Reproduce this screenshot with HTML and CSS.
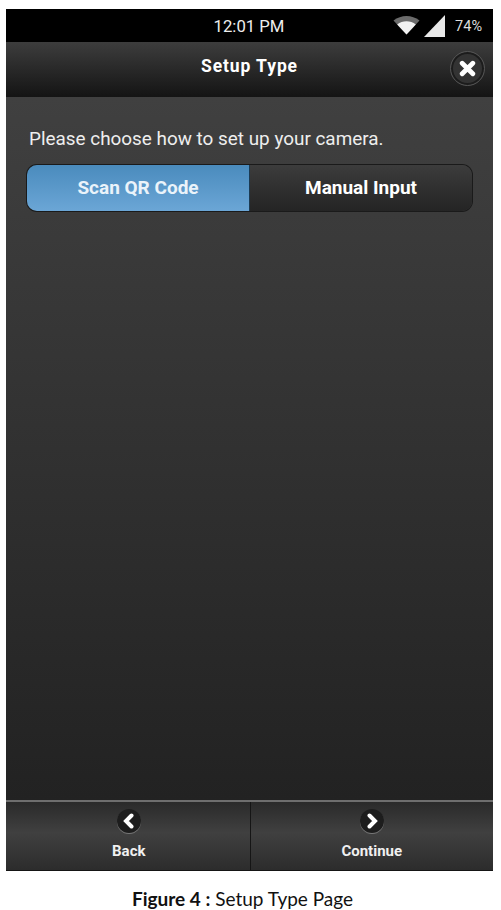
FILE: index.html
```html
<!DOCTYPE html>
<html lang="en">
<head>
    <meta charset="UTF-8">
    <meta name="viewport" content="width=device-width, initial-scale=1.0">
    <title>Setup Type</title>
    <link rel="stylesheet" href="styles.css">
</head>

<body>
    <div class="phone">
        <div class="status-bar">
            <span class="status-time">12:01 PM</span>
            <div class="status-icons">
                <svg class="wifi-icon" viewBox="0 0 27 20" width="27" height="20">
                    <path d="M0.5 5.5 C8 -0.5 19 -0.5 26.5 5.5 L13.5 19.5 Z" fill="#6b6b6b" />
                    <path d="M4.2 9.5 C9.5 5.3 17.5 5.3 22.8 9.5 L13.5 19.5 Z" fill="#f2f2f2" />
                </svg>
                <svg class="signal-icon" viewBox="0 0 21 22" width="21" height="22">
                    <path d="M0 22 L21 0 L21 22 Z" fill="#e8e8e8" />
                </svg>
                <span class="status-battery">74%</span>
            </div>
        </div>

        <header class="title-bar">
            <h1 class="title">Setup Type</h1>
            <button class="close-btn" aria-label="Close">
                <svg viewBox="0 0 16 16" width="17" height="17">
                    <path d="M3 3 L13 13 M13 3 L3 13" stroke="white" stroke-width="4.5" stroke-linecap="round" fill="none" />
                </svg>
            </button>
        </header>

        <main class="content">
            <p class="prompt">Please choose how to set up your camera.</p>
            <div class="segmented">
                <button class="segment active">Scan QR Code</button>
                <button class="segment">Manual Input</button>
            </div>
        </main>

        <footer class="footer">
            <button class="nav-btn nav-back">
                <span class="nav-icon">
                    <svg viewBox="0 0 16 16" width="16" height="16">
                        <path d="M10.5 2.5 L5 8 L10.5 13.5" stroke="white" stroke-width="4" stroke-linecap="round" stroke-linejoin="miter" fill="none" />
                    </svg>
                </span>
                Back
            </button>
            <button class="nav-btn">
                <span class="nav-icon">
                    <svg viewBox="0 0 16 16" width="16" height="16">
                        <path d="M5.5 2.5 L11 8 L5.5 13.5" stroke="white" stroke-width="4" stroke-linecap="round" stroke-linejoin="miter" fill="none" />
                    </svg>
                </span>
                Continue
            </button>
        </footer>
    </div>
    <p class="caption"><b>Figure 4 :</b> Setup Type Page</p>
</body>

</html>
```

FILE: styles.css
```css
html, body {
    margin: 0;
    height: 100%;
    background: white;
}

body {
    padding-top: 9px;
    box-sizing: border-box;
    font-family: Roboto, sans-serif;
}

button {
    font-family: inherit;
    border: none;
    padding: 0;
}

.phone {
    width: 487px;
    height: 862px;
    margin-left: 6px;
    display: flex;
    flex-direction: column;
    color: white;
}

.status-bar {
    height: 33px;
    flex: none;
    background: black;
    display: flex;
    align-items: center;
    justify-content: center;
    position: relative;
}

.status-time {
    font-size: 16.7px;
    color: #eee;
    margin: 2px 0 0 -1px;
}

.status-icons {
    position: absolute;
    right: 11px;
    top: 6px;
    display: flex;
    align-items: flex-start;
    gap: 5px;
}

.signal-icon {
    margin-left: -1px;
}

.status-battery {
    font-size: 14.5px;
    color: #ddd;
    margin: 3px 0 0 5px;
}

.title-bar {
    height: 55px;
    flex: none;
    box-sizing: border-box;
    padding-bottom: 8px;
    background: linear-gradient(#3d3d3d, #141414);
    display: flex;
    align-items: center;
    justify-content: center;
    position: relative;
}

.title {
    margin: 0;
    font-size: 17.5px;
    font-weight: 700;
    letter-spacing: 0.9px;
}

.close-btn {
    position: absolute;
    right: 8px;
    top: 9px;
    width: 35px;
    height: 35px;
    border-radius: 50%;
    background: #333;
    border: 1px solid #555;
    box-shadow: inset 0 0 0 2px #1c1c1c;
    box-sizing: border-box;
    display: flex;
    align-items: center;
    justify-content: center;
}

.content {
    flex: 1;
    box-sizing: border-box;
    padding: 31px 21px 0 21px;
    background: linear-gradient(#404040, #222);
}

.prompt {
    margin: 0 0 15px 2px;
    font-size: 18.9px;
    line-height: 22px;
    color: #eee;
}

.segmented {
    display: flex;
    height: 46px;
    border-radius: 10px;
    overflow: hidden;
    box-shadow: 0 0 0 1px #1a1a1a;
}

.segment {
    flex: 1;
    padding-bottom: 2px;
    font-size: 19px;
    font-weight: 700;
    color: white;
    background: linear-gradient(#3c3c3c, #242424);
}

.segment.active {
    color: #eaf3fa;
    background: linear-gradient(#4a8bbd, #6ba6d6);
    border-right: 1px solid #1b3a52;
}

.footer {
    height: 71px;
    flex: none;
    display: grid;
    grid-template-columns: 1fr 1fr;
    background: linear-gradient(#2a2a2a, #404040 45%, #2c2c2c);
    border-top: 2px solid #6e6e6e;
    border-bottom: 1px solid #151515;
    box-sizing: border-box;
}

.nav-btn {
    background: none;
    color: #f0f0f0;
    font-size: 15px;
    font-weight: 700;
    display: flex;
    flex-direction: column;
    align-items: center;
    gap: 9px;
    padding-top: 7px;
}

.nav-back {
    padding-left: 2px;
}

.nav-btn + .nav-btn {
    border-left: 1px solid #151515;
}

.nav-icon {
    width: 24px;
    height: 24px;
    border-radius: 50%;
    background: #1d1d1d;
    box-shadow: 0 1px 0 #777;
    display: flex;
    align-items: center;
    justify-content: center;
}

.caption {
    margin: 16px 0 0 0;
    width: 485px;
    text-align: center;
    font-family: Lato, sans-serif;
    font-size: 19px;
    line-height: 24px;
    color: #111;
}
```
